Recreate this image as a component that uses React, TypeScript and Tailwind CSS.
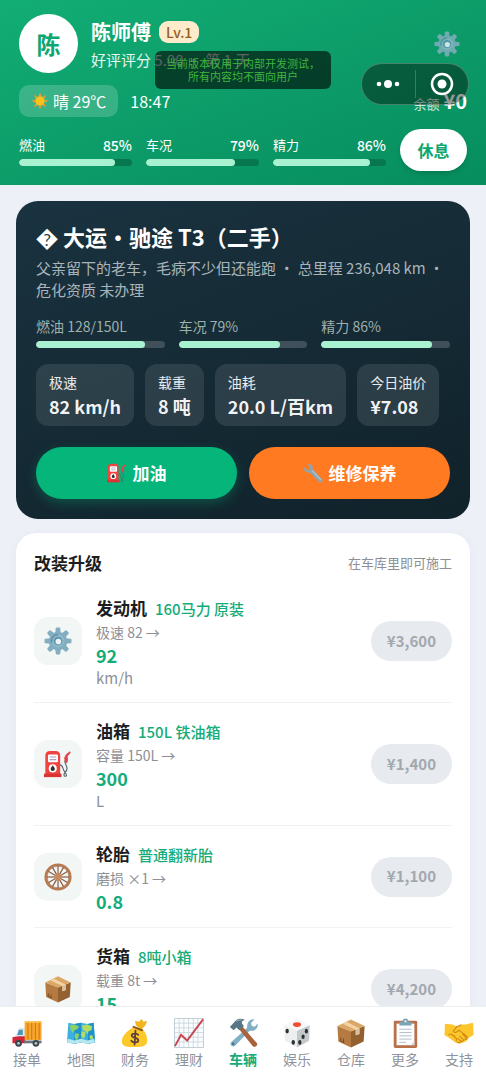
import type { ReactNode } from 'react'

type IconProps = { className?: string }

function SunIcon({ className }: IconProps) {
  return (
    <svg viewBox="0 0 32 32" className={className} aria-hidden="true">
      {[0, 45, 90, 135, 180, 225, 270, 315].map((a) => (
        <path key={a} d="M16 1l2.6 6h-5.2z" fill="#f29a2e" transform={`rotate(${a} 16 16)`} />
      ))}
      <circle cx="16" cy="16" r="8.4" fill="#fcc21b" />
    </svg>
  )
}

function GearIcon({ className }: IconProps) {
  return (
    <svg viewBox="0 0 32 32" className={className} aria-hidden="true">
      {[0, 45, 90, 135, 180, 225, 270, 315].map((a) => (
        <path
          key={a}
          d="M13.4 1.6q.2-1 1.2-1h2.8q1 0 1.2 1l.6 6h-6.4z"
          fill="#82aec0"
          transform={`rotate(${a} 16 16)`}
        />
      ))}
      <circle cx="16" cy="16" r="10.6" fill="#82aec0" />
      <circle cx="16" cy="16" r="7.4" fill="#8dbacb" />
      <path d="M8.8 18a7.4 7.4 0 0 1 7.4-9.4" fill="none" stroke="#5f8fa6" strokeWidth="1.6" />
      <circle cx="16" cy="16" r="5" fill="#5f97b1" />
      <circle cx="16.4" cy="16.6" r="3.2" fill="#eef3f4" />
    </svg>
  )
}

function PumpIcon({ className }: IconProps) {
  return (
    <svg viewBox="0 0 32 32" className={className} aria-hidden="true">
      <path
        d="M18 17c4 0 3 4 5 7s4 6 1.5 6-2-3 0-5 2.500-4 1-7-2-4-1.500-6"
        fill="none"
        stroke="#59656b"
        strokeWidth="1.3"
      />
      <path d="M29.500 1.500L25 5l-2 4 1 5 2.500 1 1-4-.5-4 3.500-4z" fill="#e0464a" />
      <path d="M1.500 6.500q0-5.500 5.500-5.500h6q5.500 0 5.500 5.500V28h-17z" fill="#ef4340" />
      <path d="M0 27h20v4H0z" fill="#d83433" />
      <rect x="4.500" y="5" width="11.500" height="9" rx="1.500" fill="#fff" />
      <path d="M6.500 8h7.500M6.500 11h7.500" stroke="#a9a0c0" strokeWidth="1.2" />
      <circle cx="10" cy="21" r="4.6" fill="#fff" />
      <path d="M10 17.500c1.200 2 2.400 3 2.400 4.200a2.400 2.400 0 0 1-4.800 0c0-1.200 1.200-2.200 2.400-4.200z" fill="#2f2f2f" />
    </svg>
  )
}

function WheelIcon({ className }: IconProps) {
  return (
    <svg viewBox="0 0 32 32" className={className} aria-hidden="true">
      {[0, 30, 60, 90, 120, 150].map((a) => (
        <path key={a} d="M16 3v26" stroke="#8d5c43" strokeWidth="1.4" transform={`rotate(${a} 16 16)`} />
      ))}
      <circle cx="16" cy="16" r="14" fill="none" stroke="#b97a50" strokeWidth="3" />
      <circle cx="16" cy="16" r="12.4" fill="none" stroke="#8d5c43" strokeWidth=".6" />
      <circle cx="16" cy="16" r="3.8" fill="#c98a5c" />
    </svg>
  )
}

function BoxIcon({ className }: IconProps) {
  return (
    <svg viewBox="0 0 32 32" className={className} aria-hidden="true">
      <path d="M1.5 8.5L16 14v17.500L2.500 25z" fill="#b47a42" />
      <path d="M30.500 8.500L16 14v17.500L29.500 25z" fill="#93602f" />
      <path d="M1.500 8.500L16 1.500l14.500 7L16 14.500z" fill="#dba768" />
      <path d="M7 6l4-2 14 7v6l-4 1.500v-6z" fill="#f3d3a1" />
      <path d="M21 12.500l4-1.500v6l-4 1.500z" fill="#d7c1a0" />
      <path d="M5 21v3M8 22v4M4 24l5 2.500" stroke="#75481f" strokeWidth="1" />
    </svg>
  )
}

function WrenchIcon({ className }: IconProps) {
  return (
    <svg viewBox="0 0 32 32" className={className} aria-hidden="true">
      <path
        d="M7 1.500c4-1 8 1 8.500 5 .2 2-.3 3 .5 4l14 14.500c2 2 1.500 4 .2 5.200s-3.500 1.300-5-.2L11 15.500c-1-.8-2-.3-4-.5-4-.5-6.500-4.500-5-8.500l4.500 4.500 4-.8.700-4z"
        fill="#8fa5ae"
      />
      <path d="M15 12.500l13.500 14" stroke="#b5c4ca" strokeWidth="1.8" strokeLinecap="round" />
    </svg>
  )
}

function TruckIcon({ className }: IconProps) {
  return (
    <svg viewBox="0 0 32 32" className={className} aria-hidden="true">
      <path d="M1 20l3-1 2.500-7q.5-1.500 2-1.500H14V26H1z" fill="#dfe9ee" />
      <path d="M5.500 18l2-5.500h4V18z" fill="#4598b8" />
      <path d="M.5 20.500L7 19.500h7V27H.5z" fill="#d3263a" />
      <path d="M13 24h18.500v3H13z" fill="#6c757a" />
      <path d="M13.500 3.500h18v20h-18z" fill="#f9a72b" />
      <path d="M17 4v19M21 4v19M25 4v19M29 4v19" stroke="#cc7a20" strokeWidth="1.2" />
      <path d="M13.500 3.500h18V5h-18z" fill="#ffc95c" />
      <circle cx="7" cy="27" r="3.6" fill="#39474d" />
      <circle cx="7" cy="27" r="1.5" fill="#b9c5ca" />
      <circle cx="25.5" cy="27" r="3.6" fill="#39474d" />
      <circle cx="25.5" cy="27" r="1.5" fill="#b9c5ca" />
    </svg>
  )
}

function MapIcon({ className }: IconProps) {
  return (
    <svg viewBox="0 0 32 32" className={className} aria-hidden="true">
      <path d="M2.500 5L9 6.500 16 5l7 1.500L29.500 5 31 26l-7.500 1.500L16 26l-7.500 1.500L1 26z" fill="#3bb1e3" />
      <path d="M9 6.500L16 5v21l-7.500 1.500zM23 6.500L29.500 5 31 26l-7.500 1.500z" fill="#1d93ce" />
      <path d="M4 8l5-1 5 2-2 3-3 1-1 3-3-3zM10 16l4 1-1 4-2 3-2-4z" fill="#8bd167" />
      <path d="M17 8l6-1 5 2-1 4-3 1-1 3-2-3-3-1zM17 14l4 1-1 5-2 2-2-4zM25 19l3-1 1 4-3 1z" fill="#b3dc62" />
      <path d="M2 22l7 2 7-2 7 2 7-2 1 4-7.500 1.500L16 26l-7.500 1.500L1 26z" fill="#b8e7ee" />
    </svg>
  )
}

function MoneyIcon({ className }: IconProps) {
  return (
    <svg viewBox="0 0 32 32" className={className} aria-hidden="true">
      <path d="M17 8l-1-5 4 1 3-3 2 3 4-1-2 5-4 4z" fill="#f3b51d" />
      <path d="M15 9C11 12 2 17 2 25c0 5 4 6 13 6s14-1 14-7c0-6-3-10-6-13z" fill="#fdc929" />
      <path d="M14.500 9.500l9 3.500" stroke="#8b5b22" strokeWidth="2.2" strokeLinecap="round" />
      <path
        d="M19.500 18c-1-1.800-7-2.200-7 .8s7 2 7 5-6 3-7.500.5M16.500 13.500l-1 15"
        fill="none"
        stroke="#5f4037"
        strokeWidth="1.9"
        strokeLinecap="round"
      />
    </svg>
  )
}

function ChartIcon({ className }: IconProps) {
  return (
    <svg viewBox="0 0 32 32" className={className} aria-hidden="true">
      <path d="M.5.5h31v31H.5z" fill="#fafdff" stroke="#bccbd0" />
      <path
        d="M5.500 1v30M10.500 1v30M15.500 1v30M20.500 1v30M25.500 1v30M1 5.500h30M1 10.500h30M1 15.500h30M1 20.500h30M1 25.500h30"
        stroke="#c4d2d6"
        strokeWidth=".8"
      />
      <path d="M1 30l6.500-12 6.500 6L31 1.500" fill="none" stroke="#c74450" strokeWidth="2" />
    </svg>
  )
}

function ToolsIcon({ className }: IconProps) {
  return (
    <svg viewBox="0 0 32 32" className={className} aria-hidden="true">
      <path
        d="M3.500 25.500L20 11c.8-.8 0-3 1-5.500 1.200-3 4.500-4.500 7-4l-3.500 4 1 3 3 .8 3-3.500c.8 3.500-1 6.500-4 7.500-2 .7-4-.2-5 .7L7.500 29.500c-3 2.500-6.500-1.500-4-4z"
        fill="#7fb0c6"
      />
      <circle cx="5.500" cy="27.500" r="1.3" fill="#466779" />
      <path d="M11 11l3.500-3 16 18.500q1.500 2-.5 3.500t-3.500 0z" fill="#a8623c" />
      <path d="M2 9.500l6.500-7c3-2 7-2 9.500-.5-3 .5-3.500 2-3 4l2 2.500-5 4.500-3-3-3 3z" fill="#587786" />
      <path d="M8.500 3.500c2-1.200 4-1.500 6-1.500" stroke="#a6c1cd" fill="none" />
    </svg>
  )
}

function DiceIcon({ className }: IconProps) {
  return (
    <svg viewBox="0 0 32 32" className={className} aria-hidden="true">
      <path d="M2.500 7.500L16 13.500v18L4 24.700Q3 24 3 23z" fill="#eceeef" />
      <path d="M29.500 7.500L16 13.500v18l12-6.800Q29 24 29 23z" fill="#c4c9cc" />
      <path d="M2.500 7.500L15 1q1-.5 2 0l12.500 6.500L16 13.500z" fill="#f8f8f8" />
      <ellipse cx="16" cy="7" rx="4.3" ry="2.6" fill="#ef4d34" />
      <g fill="#2c3032">
        <ellipse cx="5.500" cy="14" rx="1.8" ry="2.6" />
        <ellipse cx="12" cy="26" rx="1.8" ry="2.5" />
        <ellipse cx="26" cy="14" rx="1.7" ry="2.5" />
        <ellipse cx="22.500" cy="20" rx="1.7" ry="2.5" />
        <ellipse cx="19" cy="26" rx="1.7" ry="2.5" />
      </g>
    </svg>
  )
}

function ClipboardIcon({ className }: IconProps) {
  return (
    <svg viewBox="0 0 32 32" className={className} aria-hidden="true">
      <rect x="4" y="3" width="25" height="29" rx="1.5" fill="#b9714c" />
      <path d="M7 6h19v23H7z" fill="#fbfdfe" />
      <path d="M10 12h13M10 15.500h13M10 19h13M10 22.500h13M10 26h7" stroke="#b2bec4" strokeWidth="1" />
      <path d="M22 29l4-4v4z" fill="#cbd5d9" />
      <path d="M10 8V5q0-1 1-1h2.500q0-3.500 3-3.500t3 3.500H22q1 0 1 1v3z" fill="#7da6b5" />
      <circle cx="16.500" cy="3.500" r="1.2" fill="#e9f2f5" />
    </svg>
  )
}

function HandshakeIcon({ className }: IconProps) {
  return (
    <svg viewBox="0 0 32 32" className={className} aria-hidden="true">
      <path d="M1 6l8 1 5 2 4-2h5l8-2 .5 13-5 3-3 4-7 2.500-4-1-8-6-4-2.500z" fill="#fdc62d" />
      <path
        d="M14 9l-4 5c1 2.500 4 1.500 6-1l8 6.500c2 1.500 0 4-2 3M20 17.500l3.500 3.500M17 19.500l4 4c-1 2-2.500 1.500-4 .5M15 22l3 3c-1 1.500-2.500 1.500-4 .5M5 18c2-1.500 4-1 4 1 2-.5 3 .5 2.500 2 1.500 0 2.500 1 1.500 3M18 7.500L14.500 9"
        fill="none"
        stroke="#cf8a12"
        strokeWidth="1.2"
        strokeLinecap="round"
        strokeLinejoin="round"
      />
    </svg>
  )
}

const headerStats = [
  { label: '燃油', value: 85 },
  { label: '车况', value: 79 },
  { label: '精力', value: 86 },
]

const truckStats = [
  { label: '燃油 128/150L', value: 85 },
  { label: '车况 79%', value: 79 },
  { label: '精力 86%', value: 86 },
]

const specs = [
  { label: '极速', value: '82 km/h' },
  { label: '载重', value: '8 吨' },
  { label: '油耗', value: '20.0 L/百km' },
  { label: '今日油价', value: '¥7.08' },
]

const upgrades = [
  { name: '发动机', tag: '160马力 原装', from: '极速 82 →', to: '92', unit: 'km/h', price: '¥3,600', icon: <GearIcon className="size-7" /> },
  { name: '油箱', tag: '150L 铁油箱', from: '容量 150L →', to: '300', unit: 'L', price: '¥1,400', icon: <PumpIcon className="size-7" /> },
  { name: '轮胎', tag: '普通翻新胎', from: '磨损 ×1 →', to: '0.8', unit: '', price: '¥1,100', icon: <WheelIcon className="size-7" /> },
  { name: '货箱', tag: '8吨小箱', from: '载重 8t →', to: '15', unit: 't', price: '¥4,200', icon: <BoxIcon className="size-7" /> },
]

const tabs: { label: string; icon: ReactNode; active?: boolean }[] = [
  { label: '接单', icon: <TruckIcon className="size-[30px]" /> },
  { label: '地图', icon: <MapIcon className="size-[30px]" /> },
  { label: '财务', icon: <MoneyIcon className="size-[30px]" /> },
  { label: '理财', icon: <ChartIcon className="size-[30px]" /> },
  { label: '车辆', icon: <ToolsIcon className="size-[30px]" />, active: true },
  { label: '娱乐', icon: <DiceIcon className="size-[30px]" /> },
  { label: '仓库', icon: <BoxIcon className="size-[30px]" /> },
  { label: '更多', icon: <ClipboardIcon className="size-[30px]" /> },
  { label: '支持', icon: <HandshakeIcon className="size-[30px]" /> },
]

function Bar({ value, track }: { value: number; track: string }) {
  return (
    <div className={`h-[7px] overflow-hidden rounded-full ${track}`}>
      <div className="h-full rounded-full bg-[#a9f2d1]" style={{ width: `${value}%` }} />
    </div>
  )
}

function Header() {
  return (
    <header className="relative shrink-0 bg-linear-160 from-[#12ad75] to-[#078d5e] px-[19px] pt-3.5 pb-3.5 text-white">
      <div className="flex items-center gap-[13px]">
        <div className="flex size-[59px] items-center justify-center rounded-full bg-white text-2xl font-bold text-[#0ca771]">
          陈
        </div>
        <div className="flex-1 pt-0.5">
          <div className="flex items-center gap-2">
            <h1 className="text-xl leading-7 font-bold">陈师傅</h1>
            <span className="rounded-[9px] bg-[#fdebcb] px-[7px] text-sm leading-[22px] font-medium text-[#93601c]">Lv.1</span>
          </div>
          <p className="mt-0.5 text-[15px] leading-6 text-white/90">好评评分 5.00 ・ 第 1 天</p>
        </div>
        <button type="button" aria-label="设置" className="mr-[7px] opacity-85">
          <GearIcon className="size-[26px]" />
        </button>
      </div>

      <div className="mt-3 flex items-center gap-3 text-base">
        <span className="flex h-8 items-center gap-1 rounded-[10px] bg-white/18 px-3">
          <SunIcon className="size-[18px]" />
          晴 29℃
        </span>
        <span>18:47</span>
        <span className="ml-auto flex items-baseline gap-1">
          <span className="text-[13px] text-white/80">余额</span>
          <b className="text-xl leading-7">¥0</b>
        </span>
      </div>

      <div className="mt-3 flex items-center gap-3.5">
        {headerStats.map((stat) => (
          <div key={stat.label} className="flex-1">
            <div className="mb-1 flex justify-between text-sm leading-5">
              <span className="text-[13px]">{stat.label}</span>
              <span className="font-medium">{stat.value}%</span>
            </div>
            <Bar value={stat.value} track="bg-[#07774f]" />
          </div>
        ))}
        <button type="button" className="h-[42px] w-[67px] rounded-full bg-white text-base font-bold text-[#0ca771] shadow-md">
          休息
        </button>
      </div>

      {/* dev build notice and host app capsule float above the header */}
      <div className="absolute top-[51px] left-1/2 w-44 -translate-x-1/2 rounded-md bg-black/60 py-1.5 text-center text-[11px] leading-[13px] text-[#3fb53c]">
        当前版本仅用于内部开发测试，
        <br />
        所有内容均不面向用户
      </div>
      <div className="absolute top-[63px] right-[17px] flex h-[42px] w-[108px] items-center rounded-full border border-white/25 bg-black/40">
        <button type="button" aria-label="菜单" className="flex flex-1 justify-center">
          <svg viewBox="0 0 24 10" className="h-2.5 w-6" fill="#fff">
            <circle cx="3" cy="5" r="2.3" />
            <circle cx="12" cy="5" r="4" />
            <circle cx="21" cy="5" r="2.3" />
          </svg>
        </button>
        <span className="h-7 w-px bg-white/20" />
        <button type="button" aria-label="关闭" className="flex flex-1 justify-center">
          <svg viewBox="0 0 24 24" className="size-6">
            <circle cx="12" cy="12" r="10" fill="none" stroke="#fff" strokeWidth="2.5" />
            <circle cx="12" cy="12" r="4.5" fill="#fff" />
          </svg>
        </button>
      </div>
    </header>
  )
}

function TruckCard() {
  return (
    <section className="rounded-[22px] bg-linear-160 from-[#1a3340] to-[#10222a] p-5 text-white">
      <h2 className="text-[22px] leading-[30px] font-bold">{'\uFFFD'} 大运・驰途 T3（二手）</h2>
      <p className="mt-1.5 text-[15px] leading-[22px] text-[#a9b4ba]">
        父亲留下的老车，毛病不少但还能跑 ・ 总里程 236,048 km ・ 危化资质 未办理
      </p>
      <div className="mt-[15px] grid grid-cols-3 gap-3.5">
        {truckStats.map((stat) => (
          <div key={stat.label}>
            <div className="mb-[5px] text-sm leading-5 text-[#9db0ae]">{stat.label}</div>
            <Bar value={stat.value} track="bg-[#40505b]" />
          </div>
        ))}
      </div>
      <dl className="mt-4 flex gap-[11px]">
        {specs.map((spec) => (
          <div key={spec.label} className="rounded-xl bg-white/10 px-[13px] py-[7px] whitespace-nowrap">
            <dt className="text-sm leading-[22px] text-white/90">{spec.label}</dt>
            <dd className="text-lg leading-[26px] font-bold text-white/95">{spec.value}</dd>
          </div>
        ))}
      </dl>
      <div className="mt-[21px] grid grid-cols-2 gap-3 text-[17px] font-bold">
        <button type="button" className="flex h-[52px] items-center justify-center gap-1.5 rounded-full bg-[#05b57a] shadow-[0_4px_12px_rgba(5,181,122,0.3)]">
          <PumpIcon className="size-5" />
          加油
        </button>
        <button type="button" className="flex h-[52px] items-center justify-center gap-1.5 rounded-full bg-[#ff7a20]">
          <WrenchIcon className="size-5" />
          维修保养
        </button>
      </div>
    </section>
  )
}

function Upgrades() {
  return (
    <section className="mt-3.5 rounded-[20px] bg-white px-[18px] pt-[17px] shadow-[0_2px_10px_rgba(40,60,90,0.05)]">
      <div className="mb-1 flex items-center justify-between">
        <h2 className="text-[17px] leading-[26px] font-bold text-[#1c1d20]">改装升级</h2>
        <span className="text-[13px] text-[#8d9096]">在车库里即可施工</span>
      </div>
      <ul>
        {upgrades.map((item) => (
          <li key={item.name} className="flex items-center gap-3.5 border-b border-[#f1f2f4] py-3.5">
            <div className="flex size-12 shrink-0 items-center justify-center rounded-[14px] bg-[#f2f6f5]">{item.icon}</div>
            <div className="flex-1">
              <div className="flex h-[27px] items-baseline gap-2 leading-[27px]">
                <h3 className="text-[17px] font-bold text-[#1c1d20]">{item.name}</h3>
                <span className="text-[15px] font-medium text-[#14ac78]">{item.tag}</span>
              </div>
              <div className="text-sm leading-[22px] text-[#8d9096]">{item.from}</div>
              <div className="text-lg leading-6 font-bold text-[#14ac78]">{item.to}</div>
              {item.unit && <div className="text-[15px] leading-[21px] text-[#8d9096]">{item.unit}</div>}
            </div>
            <button type="button" className="h-10 rounded-full bg-[#e7eaee] px-4 text-[15px] font-bold text-[#a3a8af]">
              {item.price}
            </button>
          </li>
        ))}
      </ul>
    </section>
  )
}

function TabBar() {
  return (
    <nav className="grid h-[74px] shrink-0 grid-cols-9 border-t border-[#eceef1] bg-white pt-2.5">
      {tabs.map((tab) => (
        <a
          key={tab.label}
          href="#"
          className={`flex flex-col items-center text-sm leading-5 ${tab.active ? 'font-bold text-[#14ac78]' : 'text-[#8f949c]'}`}
        >
          <span className="flex h-8 items-center">{tab.icon}</span>
          {tab.label}
        </a>
      ))}
    </nav>
  )
}

export default function App() {
  return (
    <div className="flex h-dvh flex-col bg-[#edf0f7] font-['Noto_Sans_CJK_SC',sans-serif]">
      <Header />
      <main className="min-h-0 flex-1 overflow-y-auto px-4 pt-4 pb-6 [scrollbar-width:none]">
        <TruckCard />
        <Upgrades />
      </main>
      <TabBar />
    </div>
  )
}
